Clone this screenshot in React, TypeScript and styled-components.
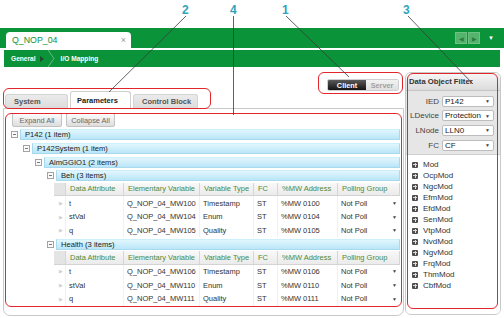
import styled, { createGlobalStyle } from "styled-components";

const GREEN = "#0a9339";
const RED = "#e3262b";

const Global = createGlobalStyle`
  html, body { margin: 0; padding: 0; background: #fff; }
  body { font-family: "Liberation Sans", Arial, sans-serif; }
  * { box-sizing: border-box; }
`;

const Frame = styled.div`
  position: relative;
  width: 504px;
  height: 318px;
  overflow: hidden;
  background: #fff;
  font-family: "Liberation Sans", Arial, sans-serif;
  color: #333;
`;

const CalloutStrip = styled.div`
  height: 28px;
`;

/* ---------- document tab bar ---------- */

const TabBar = styled.div`
  height: 20px;
  background: ${GREEN};
  display: flex;
  align-items: flex-end;
  padding: 0 10px 0 6px;
`;

const DocTab = styled.div`
  width: 125px;
  height: 16px;
  background: #fff;
  border-radius: 4px 4px 0 0;
  display: flex;
  align-items: center;
  justify-content: space-between;
  padding: 0 5px 0 6px;
  font-size: 8.8px;
  color: ${GREEN};
`;

const CloseX = styled.span`
  color: #9a9a9a;
  font-size: 9px;
`;

const Grow = styled.div`
  flex: 1;
`;

const NavGroup = styled.div`
  display: flex;
  gap: 1px;
  align-self: center;
  margin-right: 8px;
`;

const NavBtn = styled.div`
  width: 12px;
  height: 12px;
  background: #54b36c;
  border: 1px solid #6cc283;
  display: flex;
  align-items: center;
  justify-content: center;
  color: #2a7a41;
  font-size: 6px;
`;

const MenuCaret = styled.div`
  align-self: center;
  color: #fff;
  font-size: 6px;
`;

/* ---------- breadcrumb ---------- */

const Crumbs = styled.div`
  height: 17px;
  margin: 2px 4px 0 4px;
  background: ${GREEN};
  display: flex;
  align-items: center;
  padding-left: 7px;
  font-size: 6.6px;
  font-weight: bold;
  color: #fff;
`;

const Crumb = styled.span`
  display: flex;
  align-items: center;
  gap: 4px;
`;

const CrumbArrow = styled.span`
  width: 0;
  height: 0;
  border-top: 3px solid transparent;
  border-bottom: 3px solid transparent;
  border-left: 4px solid #1d4d2a;
`;

const CrumbSep = styled.svg`
  width: 8px;
  height: 17px;
  margin: 0 6px 0 3px;
`;

/* ---------- body ---------- */

const Body = styled.div`
  display: flex;
  padding-left: 3px;
`;

const Main = styled.div`
  width: 401px;
  display: flex;
  flex-direction: column;
`;

const MainHead = styled.div`
  height: 41px;
  display: flex;
  align-items: flex-end;
  justify-content: space-between;
  padding-left: 2px;
`;

const Tabs = styled.div`
  display: flex;
  align-items: flex-end;
  gap: 2px;
`;

const Tab = styled.div<{ $active?: boolean; $w: number }>`
  width: ${(p) => p.$w}px;
  height: ${(p) => (p.$active ? 17 : 14)}px;
  padding-left: ${(p) => (p.$active ? 6 : 8)}px;
  display: flex;
  align-items: center;
  font-size: 7.5px;
  font-weight: bold;
  color: ${(p) => (p.$active ? "#222" : "#555")};
  background: ${(p) =>
    p.$active ? "#fff" : "linear-gradient(#ebebeb, #dcdcdc)"};
  border: 1px solid ${(p) => (p.$active ? "#cfcfcf" : "#d4d4d4")};
  border-bottom: none;
  border-radius: 3px 3px 0 0;
`;

const Toggle = styled.div`
  display: flex;
  height: 12px;
  margin: 0 5px 17px 0;
  border-radius: 2px;
  overflow: hidden;
  border: 1px solid #cfcfcf;
`;

const ToggleBtn = styled.div<{ $on?: boolean; $w: number }>`
  width: ${(p) => p.$w}px;
  display: flex;
  align-items: center;
  justify-content: center;
  font-size: 7.3px;
  font-weight: bold;
  color: ${(p) => (p.$on ? "#fff" : "#a0a0a0")};
  background: ${(p) =>
    p.$on ? "linear-gradient(#5a5a5a, #141414)" : "linear-gradient(#f2f2f2, #e0e0e0)"};
`;

const TreePanel = styled.div`
  height: 208px;
  border: 1px solid #c9c9c9;
  border-radius: 0 0 7px 7px;
  padding: 4px 3px 0 0;
`;

const Toolbar = styled.div`
  display: flex;
  gap: 4px;
  padding-left: 8px;
  margin-bottom: 1px;
`;

const ToolBtn = styled.div<{ $w: number }>`
  width: ${(p) => p.$w}px;
  height: 14px;
  display: flex;
  align-items: center;
  justify-content: center;
  font-size: 7.4px;
  color: #666;
  background: linear-gradient(#fbfbfb, #dedede);
  border: 1px solid #c3c3c3;
  border-radius: 2px;
`;

const ROW = "13.67px";

const GroupRow = styled.div<{ $level: number }>`
  height: ${ROW};
  display: flex;
  align-items: center;
  padding-left: ${(p) => 7 + p.$level * 12}px;
`;

const Collapse = styled.span`
  position: relative;
  width: 7px;
  height: 7px;
  margin-right: 2px;
  border: 1px solid #a3a3a3;
  background: #fafafa;
  flex: none;
  &::after {
    content: "";
    position: absolute;
    left: 1px;
    right: 1px;
    top: 2px;
    height: 1px;
    background: #777;
  }
`;

const GroupBar = styled.div`
  flex: 1;
  height: 11px;
  display: flex;
  align-items: center;
  padding-left: 4px;
  font-size: 7.6px;
  color: #222;
  background: linear-gradient(#e2f6fd, #b9e6f8);
  border: 1px solid #a8d9ee;
  border-top-color: #cdeefb;
`;

const Table = styled.div`
  margin-left: 50px;
`;

const COLS = "12px 58px 76px 54px 24px 60px 62px";

const HeadRow = styled.div`
  height: ${ROW};
  display: grid;
  grid-template-columns: ${COLS};
  background: linear-gradient(#f8f8f8, #ebebeb);
  border-bottom: 1px solid #d3d3d3;
`;

const HeadCell = styled.div<{ $blank?: boolean }>`
  display: flex;
  align-items: center;
  padding-left: 4px;
  font-size: 7.5px;
  color: #4b8b3e;
  border-right: 1px solid #d6d6d6;
  background: ${(p) => (p.$blank ? "#e4e4e4" : "transparent")};
  white-space: nowrap;
  overflow: hidden;
`;

const DataRow = styled.div`
  height: ${ROW};
  display: grid;
  grid-template-columns: ${COLS};
`;

const Cell = styled.div`
  display: flex;
  align-items: center;
  padding-left: 3px;
  font-size: 7.5px;
  color: #333;
  border-right: 1px solid #f1f1f1;
  white-space: nowrap;
  overflow: hidden;
`;

const RowMark = styled(Cell)`
  justify-content: center;
  padding-left: 2px;
  color: #cfcfcf;
  font-size: 5px;
`;

const PollCell = styled(Cell)`
  justify-content: space-between;
  padding-right: 3px;
  border-right: none;
`;

const Caret = styled.span`
  font-size: 5px;
  color: #444;
`;

/* ---------- filter panel ---------- */

const Filter = styled.aside`
  width: 96px;
  height: 243px;
  margin: 5px 0 0 1px;
  border: 1px solid #c9c9c9;
  border-radius: 6px;
  overflow: hidden;
  display: flex;
  flex-direction: column;
`;

const FilterTitle = styled.div`
  height: 18px;
  flex: none;
  display: flex;
  align-items: center;
  padding-left: 3px;
  font-size: 7.7px;
  font-weight: bold;
  color: #333;
  background: linear-gradient(#f7f7f7, #dcdcdc);
  border-bottom: 1px solid #c6c6c6;
`;

const FilterForm = styled.div`
  flex: none;
  padding: 3px 0 2px 0;
  background: #e6e6e6;
  border-bottom: 1px solid #d0d0d0;
`;

const FormRow = styled.div`
  height: 14.6px;
  display: flex;
  align-items: center;
`;

const FormLabel = styled.span`
  width: 33px;
  text-align: right;
  font-size: 8px;
  color: #444;
`;

const Select = styled.div`
  width: 52px;
  height: 11px;
  margin-left: 3px;
  display: flex;
  align-items: center;
  justify-content: space-between;
  padding: 0 3px 0 2px;
  font-size: 8px;
  color: #222;
  background: #fff;
  border: 1px solid #bdbdbd;
  border-radius: 2px;
`;

const ObjList = styled.div`
  flex: 1;
  padding: 4px 0 0 6px;
  background: #fff;
`;

const ObjItem = styled.div`
  height: 11px;
  display: flex;
  align-items: center;
  gap: 5px;
  font-size: 8px;
  color: #333;
`;

const PlusBox = styled.span`
  position: relative;
  width: 6px;
  height: 6px;
  border-radius: 1px;
  background: #4f4f4f;
  flex: none;
  &::before,
  &::after {
    content: "";
    position: absolute;
    background: #ddd;
  }
  &::before {
    left: 1px;
    right: 1px;
    top: 2.5px;
    height: 1px;
  }
  &::after {
    top: 1px;
    bottom: 1px;
    left: 2.5px;
    width: 1px;
  }
`;

/* ---------- annotations ---------- */

const Leaders = styled.svg`
  position: absolute;
  left: 0;
  top: 0;
  pointer-events: none;
`;

const Num = styled.span<{ $x: number }>`
  position: absolute;
  top: 3px;
  left: ${(p) => p.$x}px;
  font-size: 12px;
  font-weight: bold;
  color: #2fa3bd;
`;

const Highlight = styled.div<{ $x: number; $y: number; $w: number; $h: number }>`
  position: absolute;
  left: ${(p) => p.$x}px;
  top: ${(p) => p.$y}px;
  width: ${(p) => p.$w}px;
  height: ${(p) => p.$h}px;
  border: 1.3px solid ${RED};
  border-radius: 6px;
  pointer-events: none;
`;

type Row = [string, string, string, string, string];

const beh: Row[] = [
  ["t", "Q_NOP_04_MW100", "Timestamp", "ST", "%MW 0100"],
  ["stVal", "Q_NOP_04_MW104", "Enum", "ST", "%MW 0104"],
  ["q", "Q_NOP_04_MW105", "Quality", "ST", "%MW 0105"],
];

const health: Row[] = [
  ["t", "Q_NOP_04_MW106", "Timestamp", "ST", "%MW 0106"],
  ["stVal", "Q_NOP_04_MW110", "Enum", "ST", "%MW 0110"],
  ["q", "Q_NOP_04_MW111", "Quality", "ST", "%MW 0111"],
];

const headers = [
  "Data Attribute",
  "Elementary Variable",
  "Variable Type",
  "FC",
  "%MW Address",
  "Polling Group",
];

const filters: [string, string][] = [
  ["IED", "P142"],
  ["LDevice", "Protection"],
  ["LNode", "LLN0"],
  ["FC", "CF"],
];

const objects = [
  "Mod",
  "OcpMod",
  "NgcMod",
  "EfmMod",
  "EfdMod",
  "SenMod",
  "VtpMod",
  "NvdMod",
  "NgvMod",
  "FrqMod",
  "ThmMod",
  "CbfMod",
];

function Group({ level, label }: { level: number; label: string }) {
  return (
    <GroupRow $level={level}>
      <Collapse />
      <GroupBar>{label}</GroupBar>
    </GroupRow>
  );
}

function AttrTable({ rows }: { rows: Row[] }) {
  return (
    <Table>
      <HeadRow>
        <HeadCell $blank />
        {headers.map((h) => (
          <HeadCell key={h}>{h}</HeadCell>
        ))}
      </HeadRow>
      {rows.map((r) => (
        <DataRow key={r[1]}>
          <RowMark>▶</RowMark>
          {r.map((v, i) => (
            <Cell key={i}>{v}</Cell>
          ))}
          <PollCell>
            Not Poll <Caret>▼</Caret>
          </PollCell>
        </DataRow>
      ))}
    </Table>
  );
}

export default function App() {
  return (
    <Frame>
      <Global />
      <CalloutStrip />

      <TabBar>
        <DocTab>
          Q_NOP_04 <CloseX>×</CloseX>
        </DocTab>
        <Grow />
        <NavGroup>
          <NavBtn>◀</NavBtn>
          <NavBtn>▶</NavBtn>
        </NavGroup>
        <MenuCaret>▼</MenuCaret>
      </TabBar>

      <Crumbs>
        <Crumb>
          General <CrumbArrow />
        </Crumb>
        <CrumbSep viewBox="0 0 8 17">
          <polyline points="1,0 7,8.5 1,17" fill="none" stroke="#7cc892" strokeWidth="0.8" />
        </CrumbSep>
        <Crumb>I/O Mapping</Crumb>
      </Crumbs>

      <Body>
        <Main>
          <MainHead>
            <Tabs>
              <Tab $w={63}>System</Tab>
              <Tab $w={61} $active>
                Parameters
              </Tab>
              <Tab $w={65}>Control Block</Tab>
            </Tabs>
            <Toggle>
              <ToggleBtn $w={38} $on>
                Client
              </ToggleBtn>
              <ToggleBtn $w={32}>Server</ToggleBtn>
            </Toggle>
          </MainHead>

          <TreePanel>
            <Toolbar>
              <ToolBtn $w={50}>Expand All</ToolBtn>
              <ToolBtn $w={49}>Collapse All</ToolBtn>
            </Toolbar>
            <Group level={0} label="P142 (1 item)" />
            <Group level={1} label="P142System (1 item)" />
            <Group level={2} label="AlmGGIO1 (2 items)" />
            <Group level={3} label="Beh (3 items)" />
            <AttrTable rows={beh} />
            <Group level={3} label="Health (3 items)" />
            <AttrTable rows={health} />
          </TreePanel>
        </Main>

        <Filter>
          <FilterTitle>Data Object Filter</FilterTitle>
          <FilterForm>
            {filters.map(([k, v]) => (
              <FormRow key={k}>
                <FormLabel>{k}</FormLabel>
                <Select>
                  {v} <Caret>▼</Caret>
                </Select>
              </FormRow>
            ))}
          </FilterForm>
          <ObjList>
            {objects.map((o) => (
              <ObjItem key={o}>
                <PlusBox />
                {o}
              </ObjItem>
            ))}
          </ObjList>
        </Filter>
      </Body>

      <Highlight $x={3} $y={88} $w={208} $h={21} />
      <Highlight $x={318} $y={72} $w={85} $h={22} />
      <Highlight $x={5} $y={113} $w={397} $h={194} />
      <Highlight $x={407} $y={73} $w={91} $h={236} />

      <Leaders width="504" height="318">
        <g stroke="#3a3a3a" strokeWidth="0.8" fill="none">
          <line x1="186" y1="16" x2="109" y2="92" />
          <line x1="233.5" y1="16" x2="233.5" y2="115" />
          <line x1="286" y1="16" x2="349" y2="77" />
          <line x1="408" y1="16" x2="473" y2="84" />
        </g>
      </Leaders>
      <Num $x={182}>2</Num>
      <Num $x={230}>4</Num>
      <Num $x={282}>1</Num>
      <Num $x={403}>3</Num>
    </Frame>
  );
}
